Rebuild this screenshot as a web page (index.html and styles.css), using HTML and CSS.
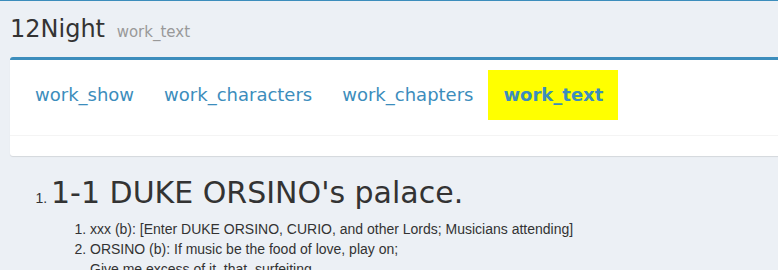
FILE: index.html
```html
<!DOCTYPE html>
<html lang="en">
<head>
    <meta charset="UTF-8">
    <meta name="viewport" content="width=device-width, initial-scale=1.0">
    <title>12Night - work_text</title>
    <link rel="stylesheet" href="styles.css">
</head>
<body>
    <div class="content-header">
        <h1>12Night <small>work_text</small></h1>
    </div>

    <div class="content">
        <div class="box">
            <ul class="nav-tabs">
                <li><a href="#">work_show</a></li>
                <li><a href="#">work_characters</a></li>
                <li><a href="#">work_chapters</a></li>
                <li class="active"><a href="#">work_text</a></li>
            </ul>
            <div class="box-body"></div>
        </div>

        <ol class="chapters">
            <li>
                <h2>1-1 DUKE ORSINO's palace.</h2>
                <ol class="lines">
                    <li>xxx (b): [Enter DUKE ORSINO, CURIO, and other Lords; Musicians attending]</li>
                    <li>ORSINO (b): If music be the food of love, play on;<br>Give me excess of it, that, surfeiting,<br>The appetite may sicken, and so die.</li>
                </ol>
            </li>
        </ol>
    </div>
</body>
</html>
```

FILE: styles.css
```css
html {
    overflow-x: hidden;
}

body {
    margin: 0;
    border-top: 1px solid #3c8dbc;
    background-color: #ecf0f5;
    color: #333;
    font-family: "Liberation Sans", Arial, sans-serif;
    font-size: 14px;
    line-height: 20px;
}

.content-header {
    padding: 15px 10px 0;
}

.content-header h1 {
    margin: 0;
    font-family: "DejaVu Sans", sans-serif;
    font-size: 24px;
    font-weight: normal;
    line-height: 26px;
}

.content-header h1 small {
    display: inline-block;
    padding-left: 4px;
    font-size: 15px;
    color: #999;
}

.content {
    padding: 12px 10px 0;
}

.box {
    margin: 0 -40px 20px 0;
    background: #fff;
    border-top: 3px solid #3c8dbc;
    border-radius: 3px;
    box-shadow: 0 1px 1px rgba(0, 0, 0, 0.1);
}

.nav-tabs {
    display: flex;
    margin: 0;
    padding: 10px 10px 15px;
    list-style: none;
    border-bottom: 1px solid #f4f4f4;
}

.nav-tabs a {
    display: block;
    padding: 15px 15px;
    font-family: "DejaVu Sans", sans-serif;
    font-size: 18px;
    line-height: 20px;
    color: #3c8dbc;
    text-decoration: none;
}

.nav-tabs .active a {
    background-color: #ffff00;
    font-weight: bold;
}

.box-body {
    padding: 10px;
}

.chapters {
    margin: 0;
    padding-left: 41px;
}

.chapters h2 {
    margin: 0 0 10px;
    font-family: "DejaVu Sans", sans-serif;
    font-size: 30px;
    font-weight: normal;
    line-height: 33px;
}

.lines {
    margin: 0;
    padding-left: 39px;
}
```
